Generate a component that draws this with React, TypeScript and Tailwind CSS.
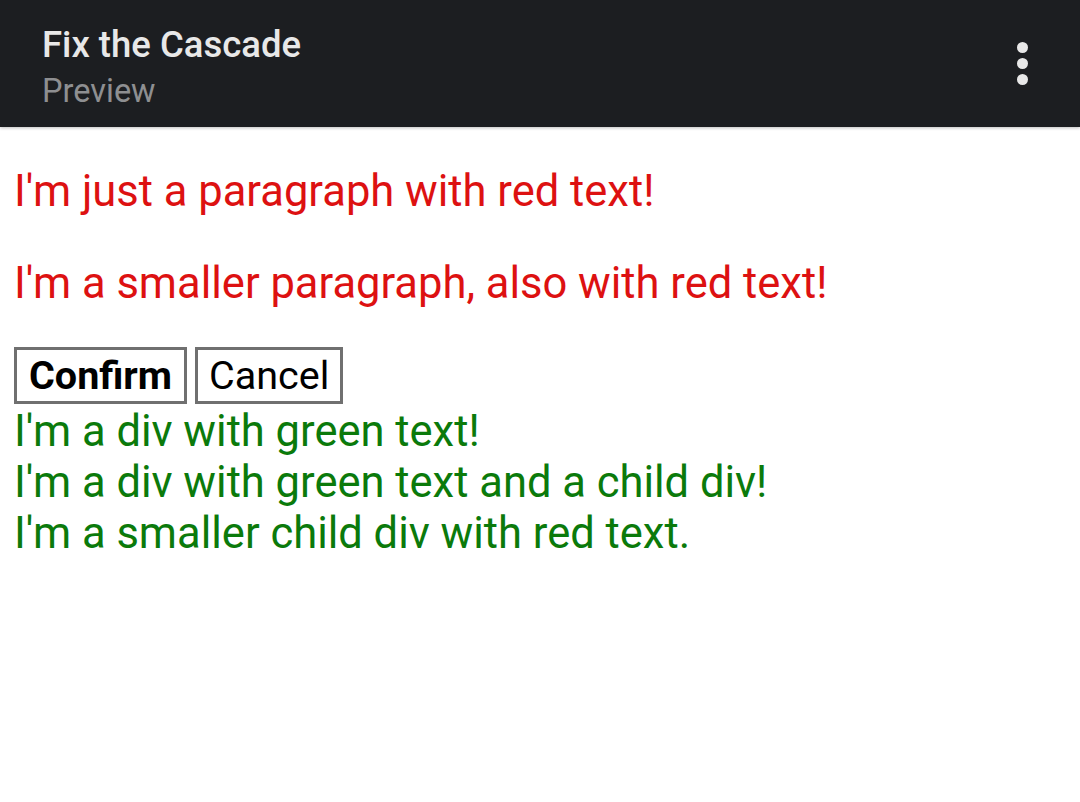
export default function App() {
  return (
    <div className="min-h-[802px] bg-white font-['Roboto',sans-serif]">
      <header className="flex h-[127px] items-center justify-between bg-[#1c1e21] pl-[42px] pr-[52px] shadow-[0_1px_3px_rgba(0,0,0,0.25)]">
        <div className="flex flex-col pt-[5px]">
          <h1 className="text-[36.5px] leading-[42px] font-medium text-[#e8e8e8]">Fix the Cascade</h1>
          <span className="mt-[7px] text-[32.5px] leading-[36px] text-[#8e8f91]">Preview</span>
        </div>
        <div className="flex flex-col gap-[5px]">
          <span className="block h-[11px] w-[11px] rounded-full bg-[#e8e8e8]" />
          <span className="block h-[11px] w-[11px] rounded-full bg-[#e8e8e8]" />
          <span className="block h-[11px] w-[11px] rounded-full bg-[#e8e8e8]" />
        </div>
      </header>

      <main className="px-[14px] pt-[40px]">
        <p className="text-[43.5px] leading-[50px] text-[#dd1111]">I'm just a paragraph with red text!</p>
        <p className="mt-[42px] text-[43.5px] leading-[50px] text-[#dd1111]">I'm a smaller paragraph, also with red text!</p>

        <div className="mt-[38px] flex gap-[8px]">
          <button className="h-[57px] border-[3px] border-[#707070] bg-white px-[12px] text-[39.5px] leading-none font-bold text-black">
            Confirm
          </button>
          <button className="h-[57px] border-[3px] border-[#707070] bg-white px-[11px] text-[39.5px] leading-none text-black">
            Cancel
          </button>
        </div>

        <div className="mt-[2px] text-[43.5px] leading-[51px] text-[#0b7a0b]">I'm a div with green text!</div>
        <div className="text-[43.5px] leading-[51px] text-[#0b7a0b]">
          I'm a div with green text and a child div!
          <div>I'm a smaller child div with red text.</div>
        </div>
      </main>
    </div>
  );
}
